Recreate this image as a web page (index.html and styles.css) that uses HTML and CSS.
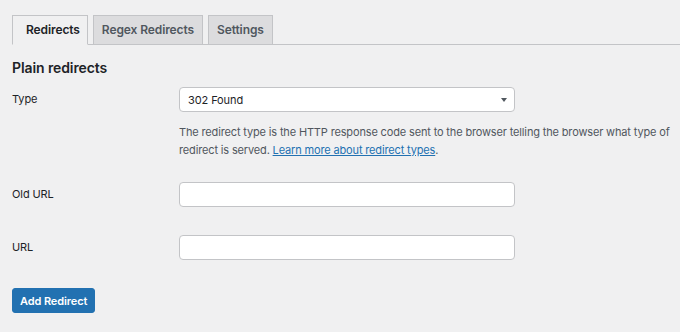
FILE: index.html
```html
<!DOCTYPE html>
<html lang="en">
<head>
    <meta charset="UTF-8">
    <title>Redirects</title>
    <link rel="stylesheet" href="styles.css">
</head>
<body>
    <nav class="tabs">
        <a class="tab active" href="#">Redirects</a>
        <a class="tab" href="#">Regex Redirects</a>
        <a class="tab" href="#">Settings</a>
    </nav>

    <h2 class="title">Plain redirects</h2>

    <form class="form">
        <div class="row">
            <label class="label">Type</label>
            <div class="field">
                <div class="select">
                    <span>302 Found</span>
                    <span class="arrow"></span>
                </div>
                <p class="desc">The redirect type is the HTTP response code sent to the browser telling the browser what type of redirect is served. <a href="#">Learn more about redirect types</a>.</p>
            </div>
        </div>
        <div class="row">
            <label class="label">Old URL</label>
            <div class="field"><input class="input" type="text"></div>
        </div>
        <div class="row">
            <label class="label">URL</label>
            <div class="field"><input class="input" type="text"></div>
        </div>
        <button class="button" type="button">Add Redirect</button>
    </form>
</body>
</html>
```

FILE: styles.css
```css
/* Base */
body {
    margin: 0;
    padding: 15px 4px 0 12px;
    background: #f0f0f1;
    color: #1d2327;
    font-family: 'Inter', sans-serif;
    font-size: 11px;
}

/* Tabs */
.tabs {
    display: flex;
    gap: 5px;
    border-bottom: 1px solid #c3c4c7;
    margin-right: -4px;
}

.tab {
    display: block;
    height: 28px;
    line-height: 28px;
    padding: 0 8px;
    margin-bottom: -1px;
    border: 1px solid #c3c4c7;
    border-bottom: none;
    background: #dcdcde;
    color: #50575e;
    font-size: 12px;
    font-weight: 600;
    letter-spacing: -0.1px;
    text-decoration: none;
}

.tab.active {
    padding: 0 7px 0 13px;
    background: #f0f0f1;
    color: #1d2327;
    border-bottom: 1px solid #f0f0f1;
}

.title {
    margin: 13px 0 0;
    font-size: 14px;
    font-weight: 600;
    letter-spacing: -0.1px;
    line-height: 20px;
}

/* Form rows */
.row {
    display: grid;
    grid-template-columns: 167px 1fr;
    align-items: start;
}

.row:first-child {
    margin-top: 9px;
}

.label {
    line-height: 25px;
    letter-spacing: -0.1px;
}

.select,
.input {
    box-sizing: border-box;
    width: 336px;
    height: 25px;
    background: #fff;
    border: 1px solid #c3c4c7;
    border-radius: 4px;
}

.select {
    display: flex;
    align-items: center;
    justify-content: space-between;
    padding: 0 7px 0 8px;
    letter-spacing: -0.1px;
}

.arrow {
    width: 0;
    height: 0;
    border-left: 3.5px solid transparent;
    border-right: 3.5px solid transparent;
    border-top: 4px solid #50575e;
}

.input {
    display: block;
    margin: 0;
    padding: 0 8px;
}

.desc {
    margin: 11px 0 0;
    color: #50575e;
    line-height: 18px;
    letter-spacing: -0.15px;
}

.desc a {
    color: #2271b1;
}

.row:nth-child(2) {
    margin-top: 23px;
}

.row:nth-child(3) {
    margin-top: 28px;
}

/* Button */
.button {
    margin-top: 28px;
    height: 25px;
    padding: 0 7px;
    background: #2271b1;
    border: 1px solid #2271b1;
    border-radius: 3px;
    color: #fff;
    font-family: inherit;
    font-size: 11px;
    font-weight: 600;
    letter-spacing: -0.1px;
}
```
